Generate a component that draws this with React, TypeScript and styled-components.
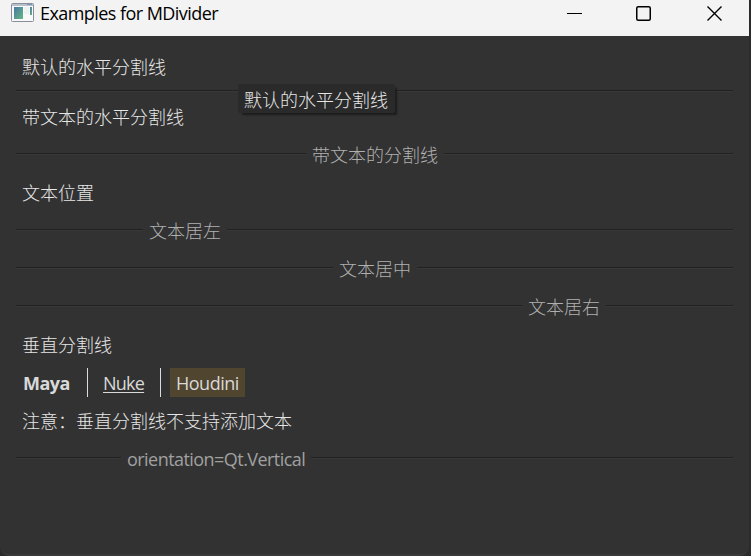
import React from 'react';
import styled, { createGlobalStyle } from 'styled-components';

const Global = createGlobalStyle`
  * { box-sizing: border-box; }
  body { margin: 0; background: #252324; overflow: hidden; }
`;

const Window = styled.main`
  position: relative;
  width: 751px;
  height: 556px;
  display: flex;
  flex-direction: column;
  padding-right: 2px;
  overflow: hidden;
  background: #2b2b2b;
  color: #e6e6e6;
  font: 300 18px/38px 'Open Sans', 'Noto Sans CJK SC', sans-serif;
`;

const TitleBar = styled.header`
  display: flex;
  align-items: flex-start;
  flex: 0 0 36px;
  padding-left: 11px;
  background: #f3f3f3;
  color: #000;
`;

const AppIcon = styled.svg`
  flex: none;
  margin: 3px 6px 0 0;
`;

const Title = styled.h1`
  margin: 0;
  flex: 1;
  font-size: 18px;
  font-weight: 400;
  line-height: 27px;
  letter-spacing: -0.56px;
  white-space: nowrap;
`;

const Controls = styled.div`
  display: flex;
`;

const ControlButton = styled.button<{ $inset?: number }>`
  display: flex;
  width: 70px;
  height: 27px;
  padding: 6px 0 0 ${p => p.$inset ?? 28}px;
  border: 0;
  background: none;
`;

const Content = styled.section`
  flex: 1;
  padding: 12px 16px 0;
  background: #323232;
  border-bottom: 2px solid #3b383a;
  border-radius: 0 0 9px 9px;
`;

const Label = styled.div`
  height: 38px;
  padding-left: 6px;
  white-space: nowrap;
`;

const Rule = styled.div<{ $w?: number }>`
  flex: ${p => (p.$w ? `0 0 ${p.$w}px` : '1')};
  height: 2px;
  background: #212121;
  border-bottom: 1px solid #393939;
`;

const DividerRow = styled.div<{ $plain?: boolean }>`
  display: flex;
  height: ${p => (p.$plain ? 12 : 38)}px;
  padding-top: ${p => (p.$plain ? 4 : 17)}px;
`;

const DividerText = styled.span<{ $w: number; $latin?: boolean }>`
  flex: 0 0 ${p => p.$w}px;
  margin-top: -17px;
  padding-left: 6px;
  color: ${p => (p.$latin ? '#a0a0a0' : '#b0b0b0')};
  font-weight: ${p => (p.$latin ? 400 : 300)};
  letter-spacing: ${p => (p.$latin ? -0.55 : 0)}px;
  white-space: nowrap;
`;

const ToolRow = styled.div`
  display: flex;
  height: 38px;
  padding: 4px 0 0 7px;
  color: #d9d9d9;
  font-weight: 400;
  line-height: 30px;
`;

const Maya = styled.strong`
  width: 64px;
  font-weight: 700;
  letter-spacing: -0.5px;
`;

const Nuke = styled.a`
  width: 42px;
  margin: 0 15px;
  letter-spacing: -0.75px;
  white-space: nowrap;
  text-decoration: underline;
  text-decoration-thickness: 1px;
  text-underline-offset: 2px;
`;

const VerticalRule = styled.i`
  width: 1px;
  height: 29px;
  background: #dcdcdc;
`;

const Houdini = styled.mark`
  width: 75px;
  height: 29px;
  margin-left: 9px;
  padding-left: 6px;
  color: inherit;
  letter-spacing: -0.5px;
  background: #50452f;
`;

const Tooltip = styled.div`
  position: absolute;
  left: 238px;
  top: 84px;
  width: 157px;
  height: 29px;
  padding-left: 6px;
  line-height: 32px;
  white-space: nowrap;
  background: #2a2a2a;
  border-radius: 2px;
  box-shadow: 3px 3px 2px -1px #1d1d1d;
`;

type DividerProps = { text?: string; left?: number; gap?: number; latin?: boolean };

function Divider({ text, left, gap = 0, latin }: DividerProps) {
  return (
    <DividerRow $plain={!text}>
      <Rule $w={left} />
      {text && <DividerText $w={gap} $latin={latin}>{text}</DividerText>}
      {text && <Rule />}
    </DividerRow>
  );
}

export default function App() {
  return (
    <Window>
      <Global />
      <TitleBar>
        <AppIcon width="23" height="19" viewBox="0 0 23 19">
          <defs>
            <linearGradient id="pane" x1="0" y1="0" x2="1" y2="1">
              <stop stopColor="#4978a4" />
              <stop offset="1" stopColor="#65b883" />
            </linearGradient>
          </defs>
          <rect x=".5" y=".5" width="22" height="18" rx="1" fill="#f8f9fb" stroke="#898e98" />
          <path d="M1 1.5h21M1 2.5h21" stroke="#b9c0cc" />
          <path d="M16 1.5h5" stroke="#8094b5" />
          <rect x="3" y="4" width="9" height="12" fill="url(#pane)" />
          <path d="M13 4h5v7h-5z" fill="#eef2ef" />
          <rect x="19" y="4" width="2" height="8" fill="url(#pane)" />
        </AppIcon>
        <Title>Examples for MDivider</Title>
        <Controls>
          <ControlButton aria-label="Minimize">
            <svg width="15" height="15"><path d="M0 7.5h15" stroke="#000" /></svg>
          </ControlButton>
          <ControlButton aria-label="Maximize" $inset={27}>
            <svg width="15" height="15"><rect x=".75" y=".75" width="13.5" height="13.5" rx="1.5" fill="none" stroke="#000" strokeWidth="1.5" /></svg>
          </ControlButton>
          <ControlButton aria-label="Close">
            <svg width="15" height="15"><path d="m.5.5 14 14m0-14-14 14" stroke="#000" strokeWidth="1.4" /></svg>
          </ControlButton>
        </Controls>
      </TitleBar>
      <Content>
        <Label>默认的水平分割线</Label>
        <Divider />
        <Label>带文本的水平分割线</Label>
        <Divider text="带文本的分割线" left={290} gap={138} />
        <Label>文本位置</Label>
        <Divider text="文本居左" left={127} gap={84} />
        <Divider text="文本居中" left={317} gap={84} />
        <Divider text="文本居右" left={506} gap={84} />
        <Label>垂直分割线</Label>
        <ToolRow>
          <Maya>Maya</Maya>
          <VerticalRule />
          <Nuke>Nuke</Nuke>
          <VerticalRule />
          <Houdini>Houdini</Houdini>
        </ToolRow>
        <Label>注意：垂直分割线不支持添加文本</Label>
        <Divider text="orientation=Qt.Vertical" left={105} gap={190} latin />
      </Content>
      <Tooltip>默认的水平分割线</Tooltip>
    </Window>
  );
}
